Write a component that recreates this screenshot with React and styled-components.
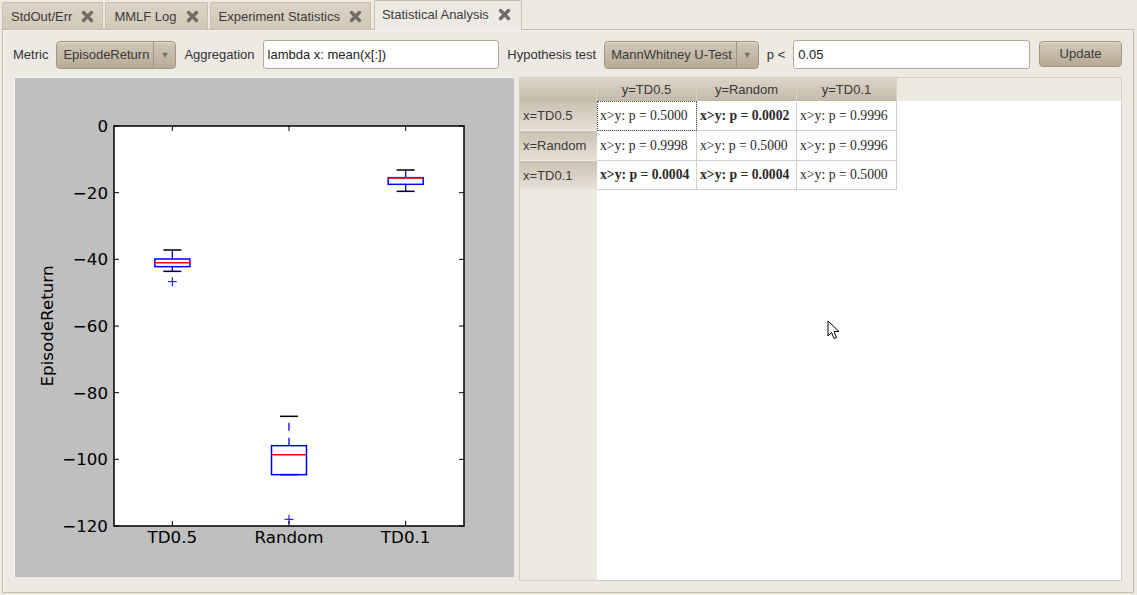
import React from "react";
import styled, { createGlobalStyle, css } from "styled-components";

const Global = createGlobalStyle`
  html, body { margin: 0; padding: 0; }
  body {
    background: #ede9e3;
    font-family: "Liberation Sans", Arial, sans-serif;
    font-size: 13px;
    color: #333;
    width: 1137px;
    height: 595px;
    overflow: hidden;
  }
`;

const Window = styled.div`
  display: flex;
  flex-direction: column;
  width: 1137px;
  height: 595px;
`;

const TabBar = styled.div`
  display: flex;
  align-items: flex-end;
  gap: 2px;
  height: 29px;
  padding-left: 2px;
  position: relative;
  z-index: 2;
`;

const Tab = styled.div`
  box-sizing: border-box;
  display: flex;
  align-items: center;
  gap: 9px;
  padding: 0 8px 0 8px;
  height: 27px;
  color: #3c3c3c;
  border: 1px solid #cbbfa9;
  border-bottom: none;
  border-radius: 2px 2px 0 0;
  background: linear-gradient(#dcd3c5, #d2c8b7);
  ${(p) =>
    p.$active &&
    css`
      height: 30px;
      margin-bottom: -1px;
      margin-left: 1px;
      padding: 0 10px 3px 7px;
      background: #ede9e3;
      border-color: #cdc2ae;
    `}
`;

const CloseIcon = () => (
  <svg width="13" height="13" viewBox="0 0 13 13">
    <path d="M2.5 2.5 L10.5 10.5 M10.5 2.5 L2.5 10.5" stroke="#6f6c68" strokeWidth="3.4" strokeLinecap="round" />
  </svg>
);

const Panel = styled.div`
  box-sizing: border-box;
  margin: 0 3px 0 2px;
  height: 564px;
  border: 1px solid #c8bca7;
  box-shadow: inset 1px 1px 0 #f6f3ee;
  padding: 10px 11px 10px 11px;
  display: flex;
  flex-direction: column;
  gap: 8px;
`;

const Toolbar = styled.div`
  display: flex;
  align-items: center;
  gap: 8px;
  height: 29px;
  margin-left: -1px;
`;

const Label = styled.span`
  color: #333;
  white-space: nowrap;
`;

const Combo = styled.div`
  box-sizing: border-box;
  display: flex;
  align-items: stretch;
  height: 28px;
  border: 1px solid #a2967f;
  border-radius: 4px;
  background: linear-gradient(#d2c8b8, #b7ab96);
  color: #3a3a3a;
  box-shadow: inset 0 1px 0 rgba(255,255,255,0.35);
`;

const ComboText = styled.span`
  display: flex;
  align-items: center;
  padding: 0 4px 0 6px;
  white-space: nowrap;
`;

const ComboArrow = styled.span`
  width: 21px;
  border-left: 1px solid #a0947f;
  display: flex;
  align-items: center;
  justify-content: center;
  color: #77716a;
  font-size: 9px;
`;

const Input = styled.div`
  box-sizing: border-box;
  flex: 1;
  height: 29px;
  background: #fff;
  border: 1px solid #b3a996;
  border-radius: 3px;
  display: flex;
  align-items: center;
  padding: 0 6px 0 4px;
  color: #222;
  white-space: nowrap;
`;

const Button = styled.div`
  box-sizing: border-box;
  width: 83px;
  height: 26px;
  margin-left: 1px;
  margin-bottom: 2px;
  border: 1px solid #a2967f;
  border-radius: 4px;
  background: linear-gradient(#d4cab9, #b5a994);
  display: flex;
  align-items: center;
  justify-content: center;
  color: #3a3a3a;
  box-shadow: inset 0 1px 0 rgba(255,255,255,0.35);
`;

const Content = styled.div`
  display: flex;
  gap: 5px;
  height: 504px;
  align-items: flex-start;
`;

const Canvas = styled.div`
  box-sizing: border-box;
  width: 500px;
  height: 500px;
  background: #bfbfbf;
  border-left: 1px solid #f2f2f2;
  border-top: 1px solid #f2f2f2;
  flex-shrink: 0;
`;

const TableFrame = styled.div`
  box-sizing: border-box;
  width: 603px;
  height: 504px;
  border: 1px solid #d6cfc3;
  display: grid;
  grid-template-columns: 77px 1fr;
  grid-template-rows: 23px 1fr;
  background: #ede9e3;
  position: relative;
`;

const Corner = styled.div`
  background: linear-gradient(#ddd5c8, #c3b9a7);
  border-right: 1px solid #d8d1c5;
`;

const HeaderStrip = styled.div`
  display: flex;
`;

const ColHeader = styled.div`
  box-sizing: border-box;
  width: 100px;
  display: flex;
  align-items: center;
  justify-content: center;
  background: linear-gradient(#ddd5c8, #c3b9a7);
  border-right: 1px solid #d8d1c5;
  color: #3a3a3a;
`;

const RowStrip = styled.div`
  display: flex;
  flex-direction: column;
`;

const RowHeader = styled.div`
  box-sizing: border-box;
  height: ${(p) => p.$h}px;
  display: flex;
  align-items: center;
  padding-left: 3px;
  background: linear-gradient(#cbc1b0, #e6e0d5);
  border-bottom: 1px solid #ede9e3;
  color: #3a3a3a;
`;

const Viewport = styled.div`
  background: #fff;
`;

const Grid = styled.div`
  display: grid;
  grid-template-columns: repeat(3, 100px);
`;

const Cell = styled.div`
  box-sizing: border-box;
  height: ${(p) => p.$h}px;
  display: flex;
  align-items: center;
  padding-left: 3px;
  border-right: 1px solid #d4d0c8;
  border-bottom: 1px solid #d4d0c8;
  font-family: "Liberation Serif", "Times New Roman", serif;
  font-size: 13.7px;
  color: #2a2a2a;
  white-space: nowrap;
  font-weight: ${(p) => (p.$bold ? 700 : 400)};
  ${(p) =>
    p.$focus &&
    css`
      outline: 1px dotted #555;
      outline-offset: -1px;
    `}
`;

const Cursor = styled.svg`
  position: absolute;
  left: 307px;
  top: 242px;
`;

const AX = { x0: 99, x1: 449, y0: 48, y1: 448 };
const yv = (v) => AX.y0 - v * (400 / 120);
const xp = (i) => AX.x0 + (i - 0.5) * (350 / 3);

const boxes = [
  { pos: 1, q1: -42.2, q3: -39.9, med: -41, lo: -43.6, hi: -37.2, fliers: [-46.7] },
  { pos: 2, q1: -104.6, q3: -95.9, med: -98.6, lo: -104.6, hi: -87.1, fliers: [-118] },
  { pos: 3, q1: -17.5, q3: -15.5, med: -15.6, lo: -19.6, hi: -13.2, fliers: [] },
];

const tickFont = { fontFamily: "DejaVu Sans, sans-serif", fontSize: 16.7, fill: "#000" };

function BoxPlot() {
  const yticks = [0, -20, -40, -60, -80, -100, -120];
  const xlabels = ["TD0.5", "Random", "TD0.1"];
  return (
    <svg width="499" height="499" viewBox="0 0 499 499">
      <rect x={AX.x0} y={AX.y0} width={350} height={400} fill="#fff" />
      {boxes.map((b) => {
        const cx = xp(b.pos);
        const hw = 17.5;
        const cw = 9;
        return (
          <g key={b.pos}>
            <line x1={cx} x2={cx} y1={yv(b.q3)} y2={yv(b.hi)} stroke="#00f" strokeWidth="1.3" strokeDasharray="8,7" />
            <line x1={cx} x2={cx} y1={yv(b.q1)} y2={yv(b.lo)} stroke="#00f" strokeWidth="1.3" strokeDasharray="8,7" />
            <line x1={cx - cw} x2={cx + cw} y1={yv(b.hi)} y2={yv(b.hi)} stroke="#000" strokeWidth="1.5" />
            <line x1={cx - cw} x2={cx + cw} y1={yv(b.lo)} y2={yv(b.lo)} stroke="#000" strokeWidth="1.5" />
            <rect x={cx - hw} y={yv(b.q3)} width={hw * 2} height={yv(b.q1) - yv(b.q3)} fill="none" stroke="#00f" strokeWidth="1.5" />
            <line x1={cx - hw} x2={cx + hw} y1={yv(b.med)} y2={yv(b.med)} stroke="#f00" strokeWidth="1.5" />
            {b.fliers.map((f, i) => (
              <path key={i} d={`M${cx - 4.5} ${yv(f)} H${cx + 4.5} M${cx} ${yv(f) - 4.5} V${yv(f) + 4.5}`} stroke="#00f" strokeWidth="1" />
            ))}
          </g>
        );
      })}
      {yticks.map((t) => (
        <g key={t}>
          <line x1={AX.x0} x2={AX.x0 + 5} y1={yv(t)} y2={yv(t)} stroke="#000" />
          <line x1={AX.x1} x2={AX.x1 - 5} y1={yv(t)} y2={yv(t)} stroke="#000" />
          <text x={AX.x0 - 6} y={yv(t) + 6} textAnchor="end" style={tickFont}>
            {t === 0 ? "0" : "\u2212" + Math.abs(t)}
          </text>
        </g>
      ))}
      {xlabels.map((l, i) => (
        <g key={l}>
          <line x1={xp(i + 1)} x2={xp(i + 1)} y1={AX.y0} y2={AX.y0 + 5} stroke="#000" />
          <line x1={xp(i + 1)} x2={xp(i + 1)} y1={AX.y1} y2={AX.y1 - 5} stroke="#000" />
          <text x={xp(i + 1)} y={AX.y1 + 17} textAnchor="middle" style={tickFont}>
            {l}
          </text>
        </g>
      ))}
      <rect x={AX.x0} y={AX.y0} width={350} height={400} fill="none" stroke="#000" strokeWidth="1.5" />
      <text
        x={0}
        y={0}
        transform="translate(38 248) rotate(-90)"
        textAnchor="middle"
        style={tickFont}
      >
        EpisodeReturn
      </text>
    </svg>
  );
}

const tabs = ["StdOut/Err", "MMLF Log", "Experiment Statistics", "Statistical Analysis"];

const rows = [
  { name: "x=TD0.5", h: 30, cells: [["0.5000", false], ["0.0002", true], ["0.9996", false]] },
  { name: "x=Random", h: 30, cells: [["0.9998", false], ["0.5000", false], ["0.9996", false]] },
  { name: "x=TD0.1", h: 29, cells: [["0.0004", true], ["0.0004", true], ["0.5000", false]] },
];

export default function App() {
  return (
    <Window>
      <Global />
      <TabBar>
        {tabs.map((t, i) => (
          <Tab key={t} $active={i === 3}>
            <span>{t}</span>
            <CloseIcon />
          </Tab>
        ))}
      </TabBar>
      <Panel>
        <Toolbar>
          <Label>Metric</Label>
          <Combo>
            <ComboText>EpisodeReturn</ComboText>
            <ComboArrow>▼</ComboArrow>
          </Combo>
          <Label>Aggregation</Label>
          <Input>lambda x: mean(x[:])</Input>
          <Label>Hypothesis test</Label>
          <Combo>
            <ComboText>MannWhitney U-Test</ComboText>
            <ComboArrow>▼</ComboArrow>
          </Combo>
          <Label>p &lt;</Label>
          <Input>0.05</Input>
          <Button>Update</Button>
        </Toolbar>
        <Content>
          <Canvas>
            <BoxPlot />
          </Canvas>
          <TableFrame>
            <Corner />
            <HeaderStrip>
              <ColHeader>y=TD0.5</ColHeader>
              <ColHeader>y=Random</ColHeader>
              <ColHeader>y=TD0.1</ColHeader>
            </HeaderStrip>
            <RowStrip>
              {rows.map((r) => (
                <RowHeader key={r.name} $h={r.h}>
                  {r.name}
                </RowHeader>
              ))}
            </RowStrip>
            <Viewport>
              <Grid>
                {rows.map((r, ri) =>
                  r.cells.map(([v, b], ci) => (
                    <Cell key={ri + "-" + ci} $h={r.h} $bold={b} $focus={ri === 0 && ci === 0}>
                      {`x>y: p = ${v}`}
                    </Cell>
                  ))
                )}
              </Grid>
            </Viewport>
            <Cursor width="13" height="20" viewBox="0 0 13 20">
              <path d="M1 1 L1 16 L4.5 12.5 L7 18.5 L9.5 17.5 L7 11.5 L12 11.5 Z" fill="#fff" stroke="#000" strokeWidth="1" strokeLinejoin="round" />
            </Cursor>
          </TableFrame>
        </Content>
      </Panel>
    </Window>
  );
}
